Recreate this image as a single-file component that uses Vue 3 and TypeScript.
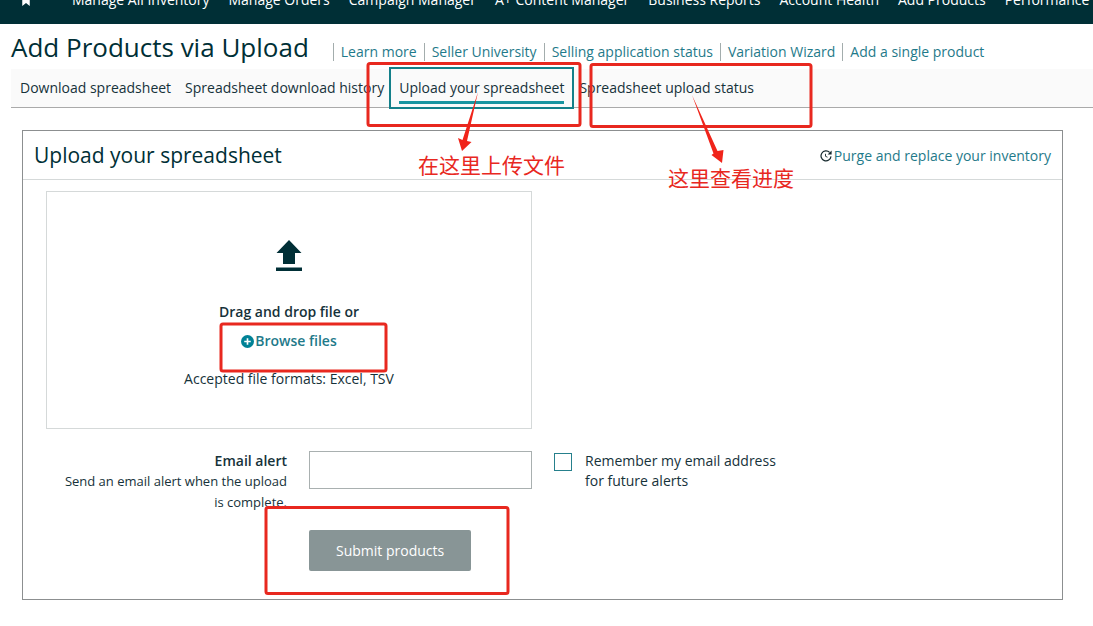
<script setup lang="ts">
import { ref } from 'vue'

const navItems: string[] = [
  'Manage All Inventory',
  'Manage Orders',
  'Campaign Manager',
  'A+ Content Manager',
  'Business Reports',
  'Account Health',
  'Add Products',
  'Performance Notifications',
]

const helpLinks: string[] = [
  'Learn more',
  'Seller University',
  'Selling application status',
  'Variation Wizard',
  'Add a single product',
]

const tabs: string[] = [
  'Download spreadsheet',
  'Spreadsheet download history',
  'Upload your spreadsheet',
  'Spreadsheet upload status',
]

const activeTab = ref(2)
const email = ref('')
const remember = ref(false)
</script>

<template>
  <div class="page">
    <nav class="topnav" aria-label="Main">
      <svg class="bookmark" viewBox="0 0 12 16" aria-hidden="true"><path d="M1 0h10v16l-5-4-5 4z" fill="#fff" /></svg>
      <a v-for="item in navItems" :key="item" href="#">{{ item }}</a>
    </nav>

    <header class="titlebar">
      <h1>Add Products via Upload</h1>
      <ul class="help">
        <li v-for="link in helpLinks" :key="link"><a href="#">{{ link }}</a></li>
      </ul>
    </header>

    <div class="tabs" role="tablist">
      <button
        v-for="(tab, i) in tabs"
        :key="tab"
        type="button"
        role="tab"
        :aria-selected="i === activeTab"
        :class="['tab', { active: i === activeTab }]"
        @click="activeTab = i"
      >
        <span>{{ tab }}</span>
      </button>
    </div>

    <main class="card">
      <div class="card-head">
        <h2>Upload your spreadsheet</h2>
        <a class="purge" href="#">
          <svg viewBox="0 0 12 12" aria-hidden="true" fill="none" stroke="#16292e">
            <path d="M9.600 2.400A5 5 0 1 0 11 6.400" stroke-width="1.2" />
            <path d="M11.600 .6v4H7.600z" fill="#16292e" stroke="none" />
            <path d="M5.500 3.800v2.500l2 .9" stroke-width=".9" />
          </svg>
          <span>Purge and replace your inventory</span>
        </a>
      </div>

      <form class="card-body" @submit.prevent>
        <section class="dropzone">
          <svg class="upload" viewBox="0 0 28 32" aria-hidden="true" fill="#002f36">
            <path d="M14 0l12.500 13H20v11H8V13H1.500z" />
            <path d="M1 27.500h26V31H1z" />
          </svg>
          <strong>Drag and drop file or</strong>
          <button type="button" class="browse">
            <svg viewBox="0 0 12 12" aria-hidden="true">
              <circle cx="6" cy="6" r="6" fill="#008296" />
              <path d="M6 3v6M3 6h6" stroke="#fff" stroke-width="1.5" />
            </svg>
            <span>Browse files</span>
          </button>
          <p>Accepted file formats: Excel, TSV</p>
        </section>

        <div class="fields">
          <label class="email-label" for="email">
            <strong>Email alert</strong>
            <small>Send an email alert when the upload is complete.</small>
          </label>
          <input id="email" v-model="email" class="email" type="email" />
          <label class="remember">
            <input v-model="remember" type="checkbox" />
            <span>Remember my email address for future alerts</span>
          </label>
          <button type="submit" class="submit">Submit products</button>
        </div>
      </form>
    </main>

    <div class="notes">
      <svg width="830" height="610" viewBox="0 0 830 610" aria-hidden="true">
        <g fill="none" stroke="#e8281f" stroke-width="3">
          <rect x="368" y="63.500" width="212" height="62" rx="2" />
          <rect x="591" y="64.500" width="220" height="62" rx="2" />
          <rect x="221" y="324" width="165" height="47" rx="2" />
          <rect x="266" y="507.500" width="242" height="86" rx="2" />
        </g>
        <g fill="#f0241a">
          <path d="M478 92L467 141L471.500 142L462 151L458 138L462.500 140z" />
          <path d="M692 95L717.500 151L723.500 150L722 163L711.500 155L713.500 153.500z" />
        </g>
      </svg>
      <span class="note upload-note">在这里上传文件</span>
      <span class="note status-note">这里查看进度</span>
    </div>
  </div>
</template>

<style>
body {
  margin: 0;
  background: #fff;
}
</style>

<style scoped>
.page {
  position: relative;
  display: flex;
  flex-direction: column;
  overflow: hidden;
  font-family: "Open Sans", "Noto Sans", "Noto Sans CJK SC", sans-serif;
  font-size: 14px;
  line-height: 20px;
  color: #16323a;
}

a {
  color: #1f7a8a;
  text-decoration: none;
}

button,
input {
  font: inherit;
  margin: 0;
}

h1,
h2,
p,
ul {
  margin: 0;
  padding: 0;
  font-weight: 400;
}

.topnav {
  display: flex;
  align-items: center;
  gap: 19px;
  height: 48px;
  margin-top: -24px;
  padding-left: 20px;
  background: #002f36;
  white-space: nowrap;
  overflow: hidden;
}

.topnav a {
  color: #fff;
  font-weight: 500;
}

.bookmark {
  flex: none;
  width: 12px;
  height: 12px;
  margin-right: 21px;
}

.titlebar {
  display: flex;
  align-items: center;
  gap: 24px;
  height: 45px;
  padding-left: 11px;
  white-space: nowrap;
}

h1 {
  font-size: 26px;
  line-height: 36px;
  color: #002f36;
}

.help {
  display: flex;
  list-style: none;
  padding-top: 10px;
}

.help li {
  border-left: 1px solid #a3adad;
  padding: 0 7px;
  line-height: 18px;
}

.tabs {
  display: flex;
  height: 38px;
  margin-left: 11px;
  padding-left: 2px;
  background: #fafafa;
  border-bottom: 1px solid #aaa;
}

.tab {
  display: flex;
  align-items: center;
  border: 0;
  padding: 0 7px;
  background: none;
  color: inherit;
  white-space: nowrap;
}

.tab.active {
  height: 42px;
  margin: -2px -2px 0;
  border: 2px solid #14808a;
  align-items: flex-end;
  padding: 0 8px 3px;
}

.tab.active span {
  padding-bottom: 3px;
  border-bottom: 3px solid #1995a1;
}

.card {
  margin: 22px 30px 26px 22px;
  border: 1px solid #8c8f90;
}

.card-head {
  display: flex;
  align-items: center;
  justify-content: space-between;
  height: 48px;
  padding: 0 11px;
  border-bottom: 1px solid #d5d9d9;
}

h2 {
  font-size: 21px;
  line-height: 28px;
  color: #002f36;
}

.purge {
  display: flex;
  align-items: center;
  gap: 2px;
  padding-top: 2px;
}

.purge svg {
  width: 12px;
  height: 12px;
}

.card-body {
  padding: 11px 23px 28px;
}

.dropzone {
  display: flex;
  flex-direction: column;
  align-items: center;
  max-width: 484px;
  padding: 48px 0 39px;
  border: 1px solid #d5d9d9;
}

.upload {
  width: 28px;
  height: 32px;
  margin-bottom: 30px;
}

.browse {
  display: flex;
  align-items: center;
  gap: 1px;
  margin: 9px 0 18px;
  padding: 0;
  border: 0;
  background: none;
  color: #1f7a8a;
}

strong,
.browse {
  font-weight: 600;
}

.browse svg {
  width: 13px;
  height: 13px;
}

.fields {
  display: grid;
  grid-template-columns: 241px 223px 230px;
  column-gap: 22px;
  margin-top: 22px;
  align-items: start;
}

.email-label {
  text-align: right;
}

.email-label strong,
.email-label small {
  display: block;
}

.email-label small {
  font-size: 13px;
  line-height: 21px;
  padding-left: 16px;
}

.email {
  box-sizing: border-box;
  width: 100%;
  height: 38px;
  padding: 0 10px;
  border: 1px solid #a9b0b0;
  background: #fff;
}

.remember {
  display: grid;
  grid-template-columns: 18px 1fr;
  gap: 13px;
}

.remember input {
  appearance: none;
  width: 18px;
  height: 18px;
  margin-top: 2px;
  border: 1px solid #26808c;
  background: #fff;
}

.submit {
  grid-column: 2;
  justify-self: start;
  height: 41px;
  margin-top: 17px;
  padding: 0 27px;
  border: 0;
  border-radius: 2px;
  background: #889596;
  color: #fff;
  font-weight: 500;
}

.notes {
  position: absolute;
  inset: 0;
  pointer-events: none;
}

.note {
  position: absolute;
  color: #e8281f;
  font-family: "Noto Sans CJK SC", sans-serif;
  font-size: 21px;
  line-height: 28px;
  white-space: nowrap;
}

.upload-note {
  left: 418px;
  top: 150px;
}

.status-note {
  left: 668px;
  top: 163px;
}
</style>
